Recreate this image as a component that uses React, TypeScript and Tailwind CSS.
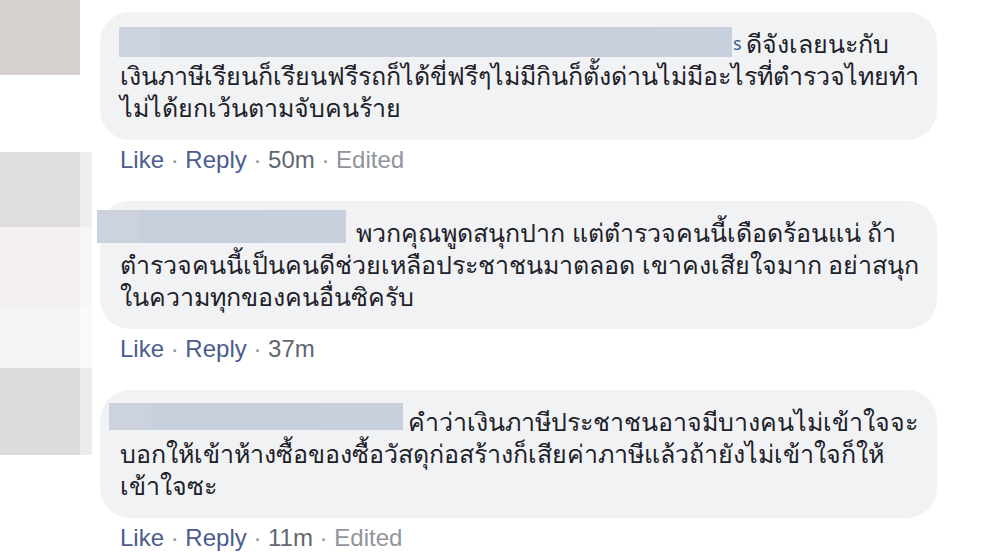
import React from "react";

type Comment = {
  barWidth: number;
  barOffset: number;
  barTop: number;
  barHeight: number;
  gap: number;
  tail?: boolean;
  lines: string[];
  time: string;
  edited?: boolean;
};

const comments: Comment[] = [
  {
    barWidth: 613,
    barOffset: -1,
    barTop: 0,
    barHeight: 30,
    gap: 4,
    tail: true,
    lines: [
      "ดีจังเลยนะกับ",
      "เงินภาษีเรียนก็เรียนฟรีรถก็ได้ขี่ฟรีๆไม่มีกินก็ตั้งด่านไม่มีอะไรที่ตำรวจไทยทำ",
      "ไม่ได้ยกเว้นตามจับคนร้าย",
    ],
    time: "50m",
    edited: true,
  },
  {
    barWidth: 249,
    barOffset: -23,
    barTop: -6,
    barHeight: 33,
    gap: 10,
    lines: [
      "พวกคุณพูดสนุกปาก แต่ตำรวจคนนี้เดือดร้อนแน่ ถ้า",
      "ตำรวจคนนี้เป็นคนดีช่วยเหลือประชาชนมาตลอด เขาคงเสียใจมาก อย่าสนุก",
      "ในความทุกของคนอื่นซิครับ",
    ],
    time: "37m",
  },
  {
    barWidth: 294,
    barOffset: -11,
    barTop: -2,
    barHeight: 27,
    gap: 5,
    lines: [
      "คำว่าเงินภาษีประชาชนอาจมีบางคนไม่เข้าใจจะ",
      "บอกให้เข้าห้างซื้อของซื้อวัสดุก่อสร้างก็เสียค่าภาษีแล้วถ้ายังไม่เข้าใจก็ให้",
      "เข้าใจซะ",
    ],
    time: "11m",
    edited: true,
  },
];

function NameBar({ c }: { c: Comment }) {
  return (
    <div
      className="flex shrink-0"
      style={{ width: c.barWidth, marginLeft: c.barOffset, marginTop: c.barTop, height: c.barHeight }}
    >
      <div className="w-[42px] bg-[#ccd3df]" />
      <div className="flex-1 bg-[#c7cfdc]" />
      <div className="w-[80px] bg-[#c9d0dd]" />
    </div>
  );
}

function CommentBlock({ c }: { c: Comment }) {
  return (
    <div>
      <div className="w-[837px] h-[128px] rounded-[30px] bg-[#f1f2f4] pl-[20px] pt-[15px] text-[#1d2129] text-[25px] leading-[32px]">
        <div className="flex items-start whitespace-nowrap">
          <NameBar c={c} />
          {c.tail && <span className="text-[#385898] text-[18px] ml-[1px]">s</span>}
          <span style={{ marginLeft: c.gap }}>{c.lines[0]}</span>
        </div>
        <div className="whitespace-nowrap">{c.lines[1]}</div>
        <div className="whitespace-nowrap">{c.lines[2]}</div>
      </div>
      <div className="h-[61px] pl-[20px] pt-[6px] text-[24px] leading-[28px] whitespace-nowrap font-['Liberation_Sans',Arial,sans-serif]">
        <span className="text-[#4b5c8e]">Like</span>
        <span className="text-[#90949c]"> · </span>
        <span className="text-[#4b5c8e]">Reply</span>
        <span className="text-[#90949c]"> · </span>
        <span className="text-[#606770]">{c.time}</span>
        {c.edited && (
          <>
            <span className="text-[#90949c]"> · </span>
            <span className="text-[#90949c]">Edited</span>
          </>
        )}
      </div>
    </div>
  );
}

export default function App() {
  return (
    <div className="w-[1000px] h-[558px] bg-white flex overflow-hidden font-['Noto_Sans','DejaVu_Sans',sans-serif]">
      {/* blurred avatars */}
      <div className="w-[92px] flex flex-col shrink-0">
        <div className="w-[80px] h-[75px] bg-[#d6d0cf]" />
        <div className="h-[77px]" />
        <div className="flex h-[75px]">
          <div className="w-[80px] bg-[#e0dedc]" />
          <div className="w-[12px] bg-[#eeedec]" />
        </div>
        <div className="flex h-[80px]">
          <div className="w-[80px] bg-[#f3f0ef]" />
          <div className="w-[12px] bg-[#f7f6f6]" />
        </div>
        <div className="flex h-[61px]">
          <div className="w-[80px] bg-[#f5f5f5]" />
          <div className="w-[12px] bg-[#fafafa]" />
        </div>
        <div className="flex h-[87px]">
          <div className="w-[80px] bg-[#dcdcdc]" />
          <div className="w-[12px] bg-[#ececec]" />
        </div>
      </div>
      <div className="pl-[8px] pt-[12px] flex flex-col">
        {comments.map((c, i) => (
          <CommentBlock key={i} c={c} />
        ))}
      </div>
    </div>
  );
}
